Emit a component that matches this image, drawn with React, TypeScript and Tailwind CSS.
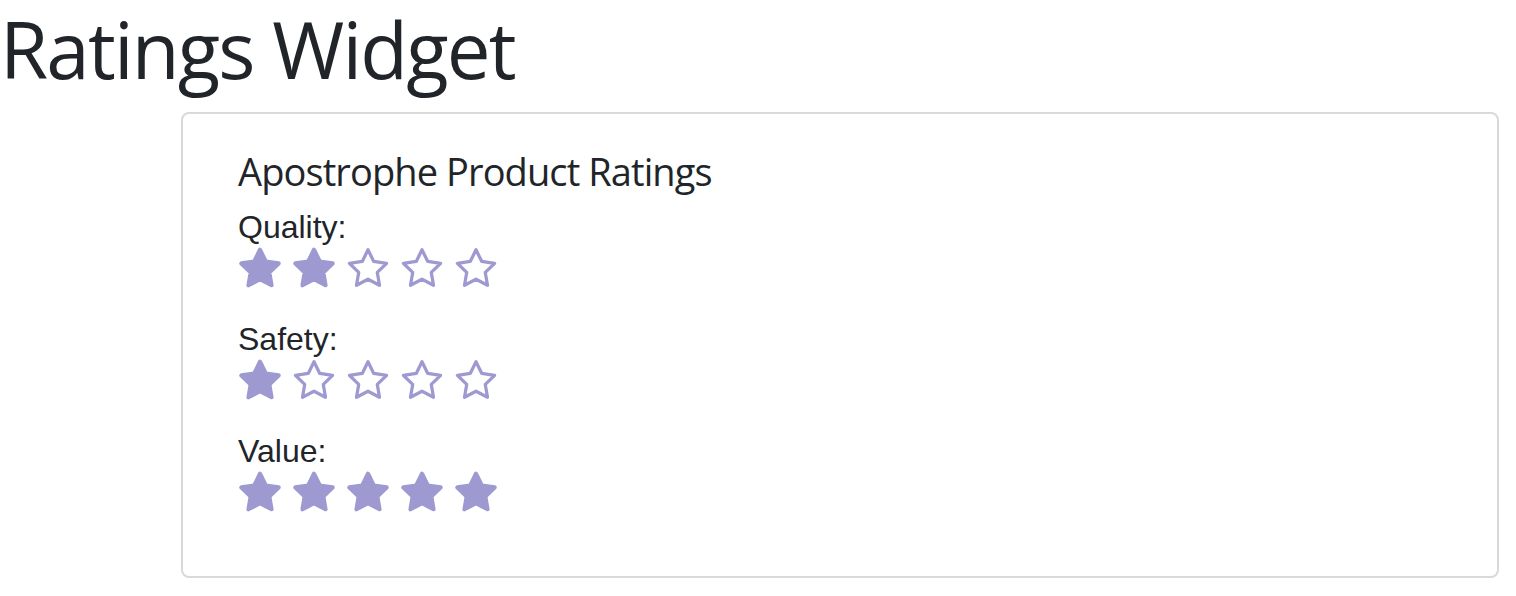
const ratings = [
  { label: "Quality:", value: 2 },
  { label: "Safety:", value: 1 },
  { label: "Value:", value: 5 },
];

function Star({ filled }: { filled: boolean }) {
  return (
    <svg
      viewBox="0 0 24 24"
      className="h-[46px] w-[48px] shrink-0"
      fill={filled ? "#9e9ad1" : "#ffffff"}
      stroke="#9e9ad1"
      strokeWidth={filled ? 2.2 : 1.7}
      strokeLinejoin="round"
    >
      <path d="M12 2.5l3 6.1 6.7 1-4.85 4.7 1.15 6.7L12 17.85 6 21l1.15-6.7L2.3 9.6l6.7-1L12 2.5z" />
    </svg>
  );
}

export default function App() {
  return (
    <div className="min-h-screen bg-white text-[#212529]">
      <h1 className="font-['Open_Sans',sans-serif] text-[78px] leading-[98px] tracking-[-1.8px]">
        Ratings Widget
      </h1>

      <div className="ml-[181px] mr-[17px] mt-[14px] h-[466px] rounded-[8px] border-2 border-[#d9d9d9] px-[55px] pt-[35px]">
        <h5 className="font-['Open_Sans',sans-serif] text-[38px] leading-[1.2] tracking-[-0.9px]">
          Apostrophe Product Ratings
        </h5>

        <div className="mt-[13px] flex flex-col gap-[29px]">
          {ratings.map((r) => (
            <div key={r.label} className="flex flex-col">
              <span className="font-['Liberation_Sans',sans-serif] text-[32px] leading-[38px]">
                {r.label}
              </span>
              <div className="ml-[-2px] mt-[-1px] flex gap-[6px]">
                {[1, 2, 3, 4, 5].map((n) => (
                  <Star key={n} filled={n <= r.value} />
                ))}
              </div>
            </div>
          ))}
        </div>
      </div>
    </div>
  );
}
